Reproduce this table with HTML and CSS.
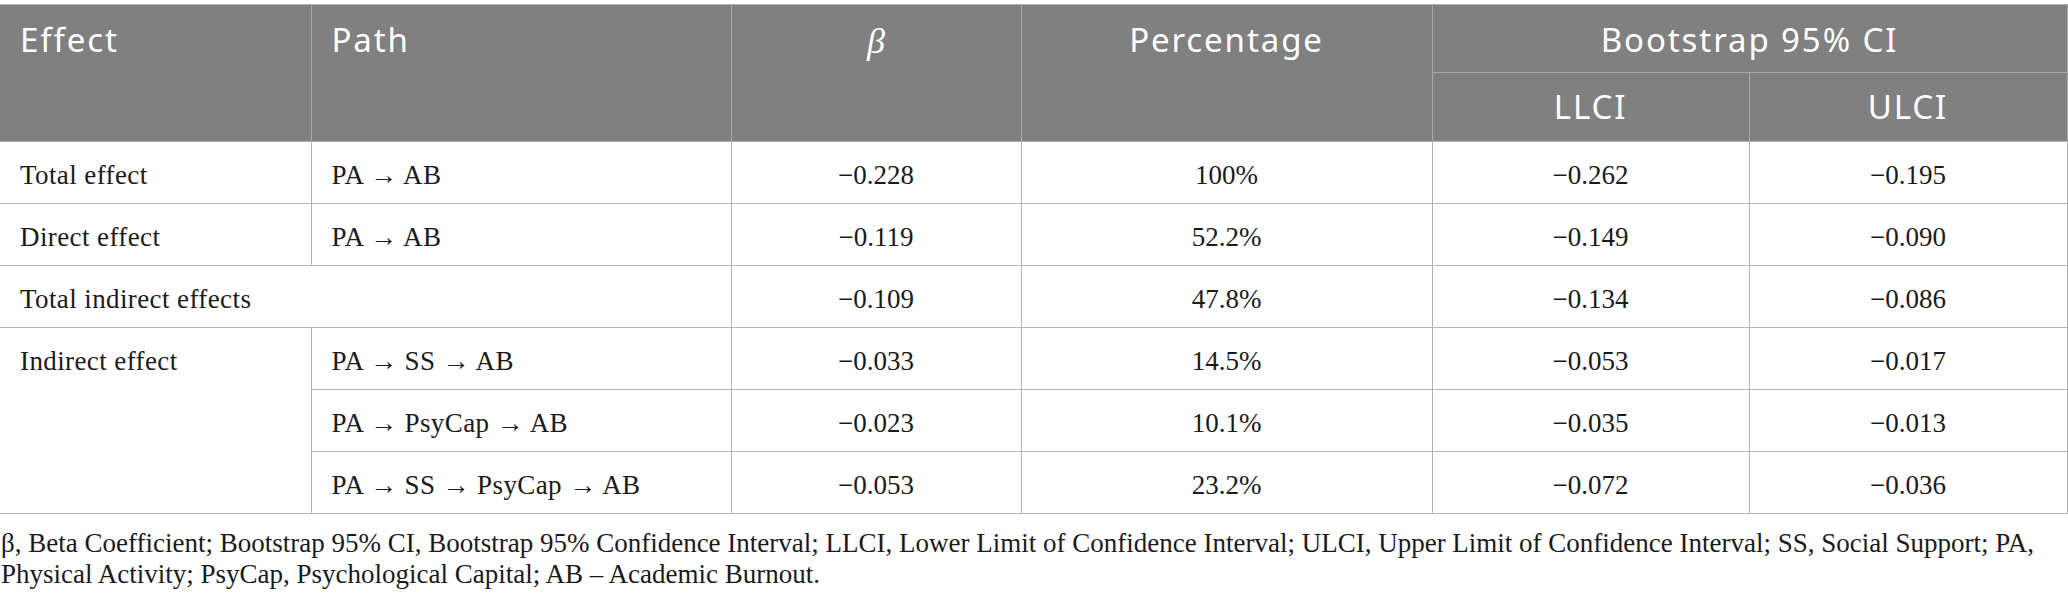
FILE: index.html
```html
<!DOCTYPE html>
<html lang="en">
<head>
<meta charset="utf-8">
<title>Table</title>
<link rel="stylesheet" href="styles.css">
</head>
<body>
<div class="wrap">
<table class="tbl">
  <colgroup>
    <col class="c1"><col class="c2"><col class="c3"><col class="c4"><col class="c5"><col class="c6">
  </colgroup>
  <thead>
    <tr class="h1">
      <th rowspan="2" class="left">Effect</th>
      <th rowspan="2" class="left">Path</th>
      <th rowspan="2" class="beta">β</th>
      <th rowspan="2">Percentage</th>
      <th colspan="2" class="ci">Bootstrap 95% CI</th>
    </tr>
    <tr class="h2">
      <th class="sub">LLCI</th>
      <th class="sub">ULCI</th>
    </tr>
  </thead>
  <tbody>
    <tr><td class="left">Total effect</td><td class="left">PA → AB</td><td>−0.228</td><td>100%</td><td>−0.262</td><td>−0.195</td></tr>
    <tr><td class="left">Direct effect</td><td class="left">PA → AB</td><td>−0.119</td><td>52.2%</td><td>−0.149</td><td>−0.090</td></tr>
    <tr><td class="left" colspan="2">Total indirect effects</td><td>−0.109</td><td>47.8%</td><td>−0.134</td><td>−0.086</td></tr>
    <tr><td class="left" rowspan="3">Indirect effect</td><td class="left">PA → SS → AB</td><td>−0.033</td><td>14.5%</td><td>−0.053</td><td>−0.017</td></tr>
    <tr><td class="left">PA → PsyCap → AB</td><td>−0.023</td><td>10.1%</td><td>−0.035</td><td>−0.013</td></tr>
    <tr><td class="left">PA → SS → PsyCap → AB</td><td>−0.053</td><td>23.2%</td><td>−0.072</td><td>−0.036</td></tr>
  </tbody>
</table>
<p class="note">β, Beta Coefficient; Bootstrap 95% CI, Bootstrap 95% Confidence Interval; LLCI, Lower Limit of Confidence Interval; ULCI, Upper Limit of Confidence Interval; SS, Social Support; PA, Physical Activity; PsyCap, Psychological Capital; AB – Academic Burnout.</p>
</div>
</body>
</html>
```

FILE: styles.css
```css
html, body {
  margin: 0;
  padding: 0;
  background: #ffffff;
}
.wrap {
  padding-top: 4px;
  width: 2067px;
}
.tbl {
  border-collapse: collapse;
  table-layout: fixed;
  width: 2067px;
  font-family: "Liberation Serif", "Times New Roman", serif;
  color: #1a1a1a;
}
.c1 { width: 311px; }
.c2 { width: 420px; }
.c3 { width: 290px; }
.c4 { width: 411px; }
.c5 { width: 317px; }
.c6 { width: 318px; }
.tbl th {
  background: #7f807f;
  color: #ffffff;
  font-family: "Noto Sans", "Open Sans", sans-serif;
  font-weight: 400;
  font-size: 33px;
  letter-spacing: 1.9px;
  line-height: 40px;
  border: 1px solid #a9a9a9;
  vertical-align: top;
  text-align: center;
  padding: 15px 20px 0 20px;
  box-sizing: border-box;
}
.tbl .h1 th { height: 68px; border-top-color: #b4b4b4; }
.tbl .h2 th { height: 69px; }
.tbl th.left { text-align: left; }
.tbl th.beta {
  font-family: "Liberation Serif", serif;
  font-style: italic;
  font-size: 36px;
  letter-spacing: 0;
  padding-top: 16px;
}
.tbl th.sub { padding-top: 14px; }
.tbl thead tr:last-child th { border-bottom: 1px solid #b4b4b4; }
.tbl td {
  border: 1px solid #b4b4b4;
  font-size: 27px;
  line-height: 30px;
  height: 62px;
  box-sizing: border-box;
  padding: 18px 20px 0 20px;
  text-align: center;
  vertical-align: top;
}
.tbl td.left { text-align: left; letter-spacing: 0.4px; }
.tbl tr > :first-child { border-left: 0; }
.note {
  margin: 14px 0 0 1px;
  font-family: "Liberation Serif", "Times New Roman", serif;
  font-size: 27px;
  line-height: 31px;
  color: #1a1a1a;
  width: 2064px;
}
```
